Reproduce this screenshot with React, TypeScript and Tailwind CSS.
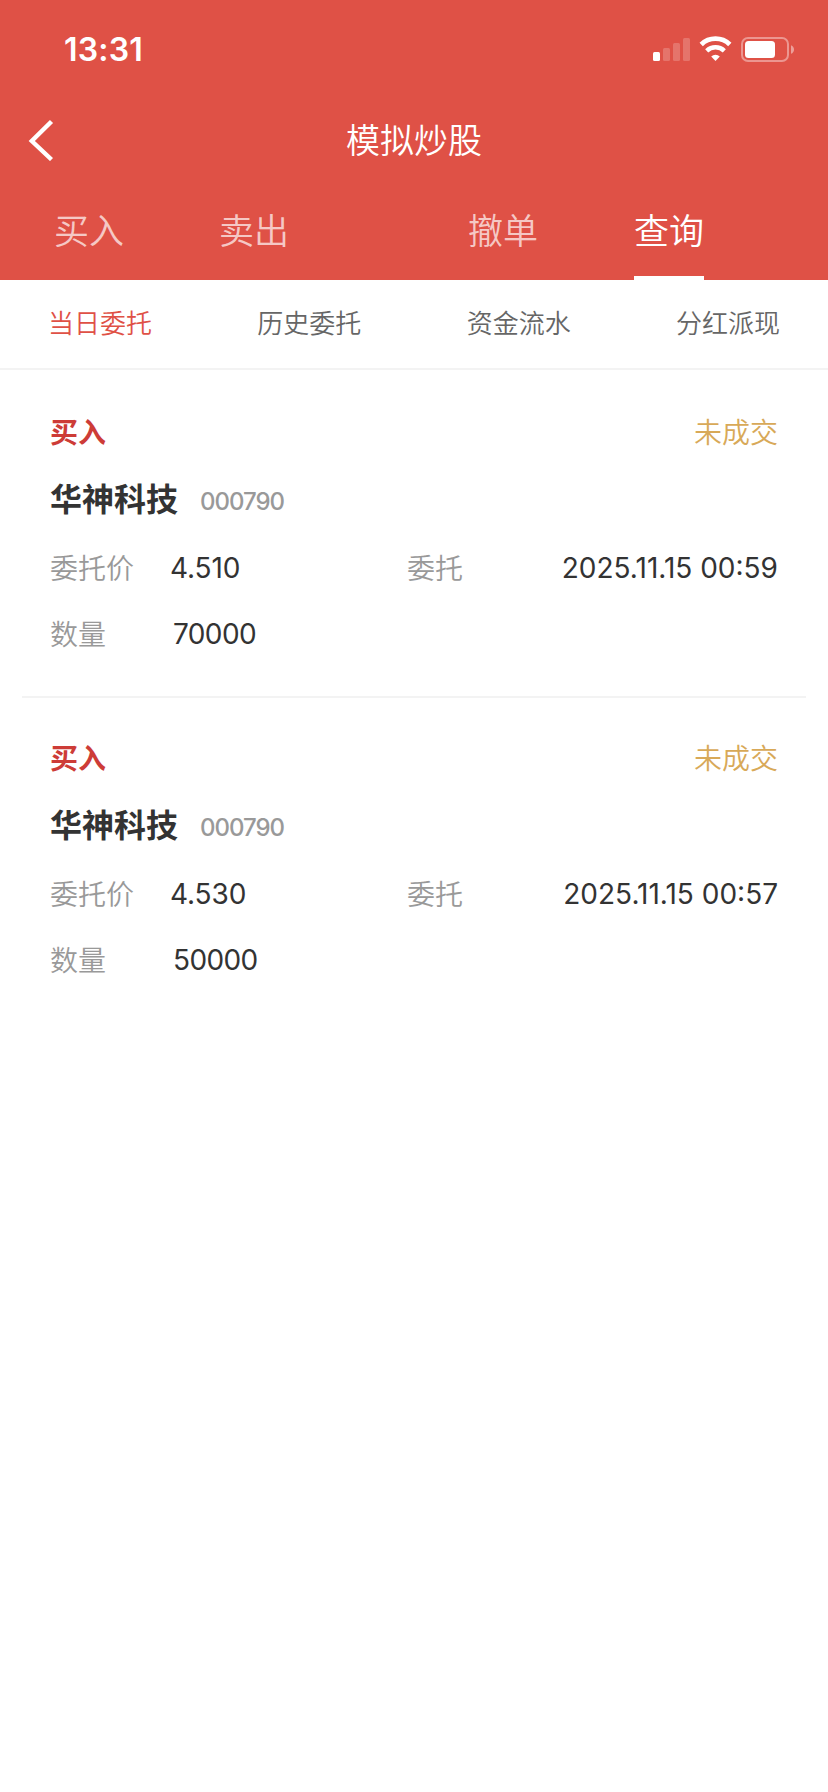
interface Order {
  side: string;
  status: string;
  name: string;
  code: string;
  price: string;
  time: string;
  amount: string;
}

const orders: Order[] = [
  { side: '买入', status: '未成交', name: '华神科技', code: '000790', price: '4.510', time: '2025.11.15 00:59', amount: '70000' },
  { side: '买入', status: '未成交', name: '华神科技', code: '000790', price: '4.530', time: '2025.11.15 00:57', amount: '50000' },
];

const subTabs = ['当日委托', '历史委托', '资金流水', '分红派现'];

function StatusIcons() {
  return (
    <svg width="144" height="28" viewBox="0 0 144 28" fill="#fff">
      <rect x="1" y="16" width="7" height="9" rx="1.5" />
      <g opacity="0.2">
        <rect x="11" y="12" width="7" height="13" rx="1.5" />
        <rect x="21" y="7" width="7" height="18" rx="1.5" />
        <rect x="31" y="2" width="7" height="23" rx="1.5" />
      </g>
      <g fill="none" stroke="#fff">
        <path d="M49.2 8.4a20.6 20.6 0 0 1 28.6 0" strokeWidth="4.8" />
        <path d="M54.7 14.8a12.8 12.8 0 0 1 17.6 0" strokeWidth="4.5" />
      </g>
      <path d="M59.2 20.5a6.2 6.2 0 0 1 8.6 0L63.5 25z" />
      <rect x="90" y="2" width="46" height="23" rx="6" fill="none" stroke="#fff" strokeWidth="2" opacity="0.4" />
      <rect x="93" y="5" width="30" height="17" rx="3.5" />
      <path d="M139 9.2c4 1.4 4 7.2 0 8.6z" opacity="0.45" />
    </svg>
  );
}

function OrderItem({ order }: { order: Order }) {
  return (
    <div className="mx-[22px] h-[326px] border-b-2 border-[#f3f3f3] px-7 pt-[39px] text-[28px] font-[350] last:border-b-0">
      <div className="flex h-11 items-center justify-between">
        <span className="font-bold text-[#cd3c37]">{order.side}</span>
        <span className="text-[#d8a958]">{order.status}</span>
      </div>
      <div className="mt-[22px] flex h-11 items-center">
        <span className="mt-[2px] text-[32px] font-bold text-[#333]">{order.name}</span>
        <span className="mt-[5px] ml-[22px] text-[24px] font-medium tracking-[-1px] text-[#999]">{order.code}</span>
      </div>
      <div className="mt-[26px] flex h-11 items-center">
        <span className="w-[120px] text-[#999]">委托价</span>
        <span className="mb-[2px] font-normal tracking-[-0.1px] text-[#333]">{order.price}</span>
        <span className="ml-auto w-[150px] text-[#999]">委托</span>
        <span className="mb-[2px] w-[221px] text-right font-normal whitespace-nowrap text-[#333]">{order.time}</span>
      </div>
      <div className="mt-[22px] flex h-11 items-center">
        <span className="w-[123px] text-[#999]">数量</span>
        <span className="mb-[2px] font-normal tracking-[-0.6px] text-[#333]">{order.amount}</span>
      </div>
    </div>
  );
}

export default function App() {
  return (
    <div className="min-h-[1792px] w-[828px] bg-white font-['Inter','Noto_Sans_CJK_SC',sans-serif] leading-none">
      <header className="flex h-[280px] flex-col bg-[#df5146] text-white">
        <div className="flex h-[100px] items-center justify-between pr-[32px] pl-[64px]">
          <span className="text-[32px] font-semibold tracking-[0.2px]">13:31</span>
          <StatusIcons />
        </div>
        <div className="grid h-[80px] grid-cols-[1fr_auto_1fr] items-center">
          <svg className="ml-[28px]" width="27" height="42" viewBox="0 0 27 42" fill="none" stroke="#fff" strokeWidth="4.4">
            <path d="M23.5 2.5 3.8 22 23.5 40.5" />
          </svg>
          <h1 className="mt-[2px] text-[34px] font-[350]">模拟炒股</h1>
        </div>
        <nav className="flex h-[100px] pl-[54px] text-[35px] font-[350] text-white/70">
          <span className="flex w-[165px] items-center pt-[3px]">买入</span>
          <span className="flex w-[249px] items-center pt-[3px]">卖出</span>
          <span className="flex w-[166px] items-center pt-[3px]">撤单</span>
          <span className="flex w-[70px] items-center border-b-4 border-white pt-[7px] text-white">查询</span>
        </nav>
      </header>
      <nav className="flex h-[90px] items-center justify-between border-b-2 border-[#f3f3f3] px-12 text-[26px] font-[350] text-[#666]">
        {subTabs.map((t, i) => (
          <span key={t} className={i === 0 ? 'text-[#df5146]' : ''}>
            {t}
          </span>
        ))}
      </nav>
      <main className="pt-[2px]">
        {orders.map((o) => (
          <OrderItem key={o.time} order={o} />
        ))}
      </main>
    </div>
  );
}
